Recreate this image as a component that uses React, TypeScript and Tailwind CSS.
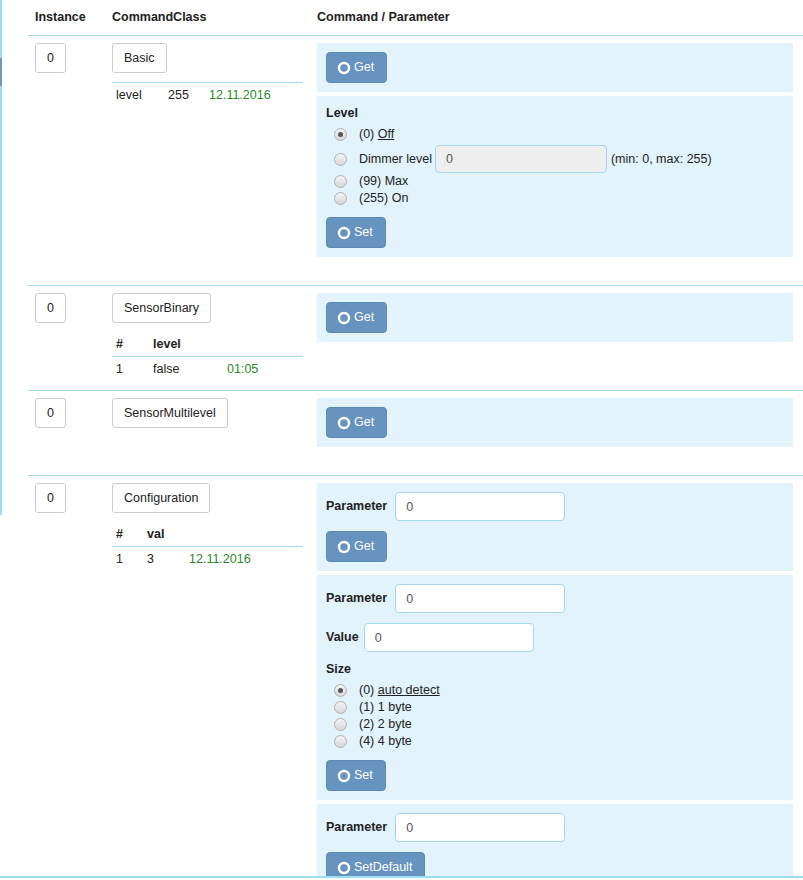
import React from "react"

type SubTable = {
  head?: string[]
  rows: string[][]
  widths: string[]
}

const GREEN = "text-[#2a8a2a]"

function OButton({ label }: { label: string }) {
  return (
    <button className="inline-flex items-center gap-[3px] h-[31px] pl-[10px] pr-[12px] rounded-[4px] bg-[#6693bf] border border-[#5d89b4] text-white">
      <svg width="14" height="14" viewBox="0 0 14 14">
        <circle cx="7" cy="7" r="5" fill="none" stroke="white" strokeWidth="2.4" />
      </svg>
      <span>{label}</span>
    </button>
  )
}

function WhiteButton({ label }: { label: string }) {
  return (
    <div className="inline-flex items-center justify-center h-[30px] min-w-[30px] px-[11px] rounded-[3px] border border-[#cccccc] bg-white text-[#222]">
      {label}
    </div>
  )
}

function Radio({ checked }: { checked?: boolean }) {
  return (
    <span className="flex items-center justify-center w-[13px] h-[13px] shrink-0 rounded-full border border-[#b0b0b0] bg-gradient-to-b from-[#f5f5f5] to-[#d6d6d6]">
      {checked && <span className="w-[5px] h-[5px] rounded-full bg-[#555]" />}
    </span>
  )
}

function RadioRow({ checked, children }: { checked?: boolean; children: React.ReactNode }) {
  return (
    <div className="flex items-center h-[17px] pl-[8px]">
      <Radio checked={checked} />
      <span className="ml-[12px]">{children}</span>
    </div>
  )
}

function Field({ label, gap, className = "" }: { label: string; gap: string; className?: string }) {
  return (
    <div className={`flex items-center ${className}`}>
      <span className={`font-bold ${gap}`}>{label}</span>
      <input
        readOnly
        defaultValue="0"
        className="w-[170px] h-[29px] px-[10px] rounded-[4px] border border-[#a3d7ee] bg-white text-[#555] outline-none"
      />
    </div>
  )
}

function Panel({ children }: { children: React.ReactNode }) {
  return <div className="bg-[#e2f3fb] px-[9px] py-[9px]">{children}</div>
}

function DataTable({ t }: { t: SubTable }) {
  return (
    <div className="mt-[10px] mr-[7px]">
      {t.head ? (
        <div className="flex h-[24px] items-center border-b border-[#a7d7ea] font-bold">
          {t.head.map((h, i) => (
            <div key={i} className={`pl-[4px] ${t.widths[i]}`}>
              {h}
            </div>
          ))}
        </div>
      ) : (
        <div className="border-b border-[#a7d7ea] -mt-[1px]" />
      )}
      {t.rows.map((r, ri) => (
        <div key={ri} className="flex h-[25px] items-center">
          {r.map((c, i) => (
            <div key={i} className={`pl-[4px] ${t.widths[i]} ${i === r.length - 1 ? GREEN : ""}`}>
              {c}
            </div>
          ))}
        </div>
      ))}
    </div>
  )
}

function Row({
  cls,
  table,
  children,
}: {
  cls: string
  table?: SubTable
  children: React.ReactNode
}) {
  return (
    <div className="grid grid-cols-[77px_205px_1fr] border-b border-[#a7d7ea] pt-[7px] pb-[8px]">
      <div className="pl-[7px]">
        <WhiteButton label="0" />
      </div>
      <div className="pl-[7px]">
        <WhiteButton label={cls} />
        {table && <DataTable t={table} />}
      </div>
      <div className="pl-[7px] pr-[10px] pb-[20px] flex flex-col gap-[4px]">{children}</div>
    </div>
  )
}

export default function App() {
  return (
    <div className="relative h-[880px] overflow-hidden bg-white font-['Liberation_Sans',Arial,sans-serif] text-[12.5px] leading-[17px] text-[#222]">
      <div className="flex">
        <div className="w-[2px] h-[515px] shrink-0 bg-[#9edcf2] pt-[58px]">
          <div className="h-[28px] bg-[#6b9cbf]" />
        </div>
        <div className="flex-1 pl-[26px]">
          <div className="grid grid-cols-[77px_205px_1fr] h-[36px] items-center border-b border-[#a7d7ea] font-bold">
            <div className="pl-[7px]">Instance</div>
            <div className="pl-[7px]">CommandClass</div>
            <div className="pl-[7px]">Command / Parameter</div>
          </div>

          <Row
            cls="Basic"
            table={{ rows: [["level", "255", "12.11.2016"]], widths: ["w-[52px]", "w-[41px]", "flex-1"] }}
          >
            <Panel>
              <OButton label="Get" />
            </Panel>
            <Panel>
              <div className="font-bold">Level</div>
              <div className="mt-[4px]">
                <RadioRow checked>
                  (0) <span className="underline">Off</span>
                </RadioRow>
                <div className="flex items-center pl-[8px] pt-[2px]">
                  <Radio />
                  <span className="ml-[12px]">Dimmer level</span>
                  <input
                    readOnly
                    defaultValue="0"
                    className="ml-[3px] w-[172px] h-[28px] px-[10px] rounded-[4px] border border-[#a3d7ee] bg-[#eeeeee] text-[#555] outline-none"
                  />
                  <span className="ml-[4px]">(min: 0, max: 255)</span>
                </div>
                <RadioRow>(99) Max</RadioRow>
                <RadioRow>(255) On</RadioRow>
              </div>
              <div className="mt-[10px]">
                <OButton label="Set" />
              </div>
            </Panel>
          </Row>

          <Row
            cls="SensorBinary"
            table={{
              head: ["#", "level"],
              rows: [["1", "false", "01:05"]],
              widths: ["w-[37px]", "w-[74px]", "flex-1"],
            }}
          >
            <Panel>
              <OButton label="Get" />
            </Panel>
          </Row>

          <Row cls="SensorMultilevel">
            <Panel>
              <OButton label="Get" />
            </Panel>
          </Row>

          <Row
            cls="Configuration"
            table={{
              head: ["#", "val"],
              rows: [["1", "3", "12.11.2016"]],
              widths: ["w-[31px]", "w-[42px]", "flex-1"],
            }}
          >
            <Panel>
              <Field label="Parameter" gap="mr-[8px]" />
              <div className="mt-[10px]">
                <OButton label="Get" />
              </div>
            </Panel>
            <Panel>
              <Field label="Parameter" gap="mr-[8px]" />
              <Field label="Value" gap="mr-[5px]" className="mt-[10px]" />
              <div className="font-bold mt-[9px]">Size</div>
              <div className="mt-[4px]">
                <RadioRow checked>
                  (0) <span className="underline">auto detect</span>
                </RadioRow>
                <RadioRow>(1) 1 byte</RadioRow>
                <RadioRow>(2) 2 byte</RadioRow>
                <RadioRow>(4) 4 byte</RadioRow>
              </div>
              <div className="mt-[10px]">
                <OButton label="Set" />
              </div>
            </Panel>
            <Panel>
              <Field label="Parameter" gap="mr-[8px]" />
              <div className="mt-[10px]">
                <OButton label="SetDefault" />
              </div>
            </Panel>
          </Row>
        </div>
      </div>
      <div className="fixed left-0 right-0 bottom-0 h-[4px] border-t-2 border-[#9edcf2] bg-white" />
    </div>
  )
}
